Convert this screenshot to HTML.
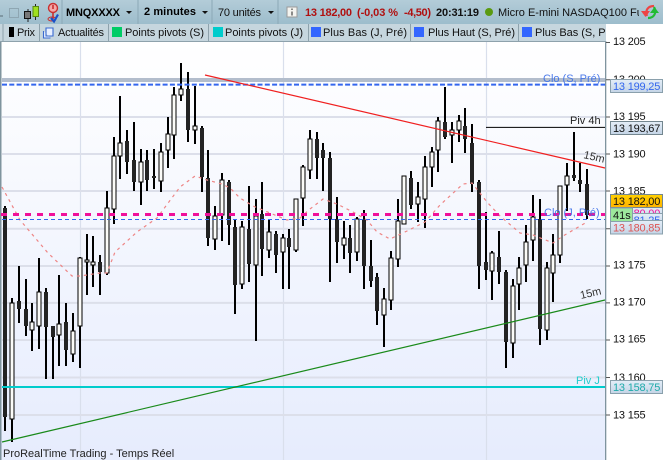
<!DOCTYPE html>
<html><head><meta charset="utf-8"><style>
html,body{margin:0;padding:0;background:#fff;width:663px;height:460px;overflow:hidden}
svg{display:block}
text{font-family:"Liberation Sans",sans-serif;font-size:11px}
</style></head><body>
<svg width="663" height="460" viewBox="0 0 663 460" xmlns="http://www.w3.org/2000/svg">
<defs>
<linearGradient id="bg" x1="0" y1="0" x2="0" y2="1"><stop offset="0" stop-color="#ffffff"/><stop offset="1" stop-color="#e6ecfd"/></linearGradient>
<linearGradient id="top" x1="0" y1="0" x2="0" y2="1"><stop offset="0" stop-color="#b3ccd8"/><stop offset="1" stop-color="#9dbdcc"/></linearGradient>
<linearGradient id="lab" x1="0" y1="0" x2="0" y2="1"><stop offset="0" stop-color="#e4eef8"/><stop offset="1" stop-color="#c4d4e6"/></linearGradient>
<linearGradient id="or" x1="0" y1="0" x2="0" y2="1"><stop offset="0" stop-color="#ffd000"/><stop offset="1" stop-color="#ffb400"/></linearGradient>
<clipPath id="tabs"><rect x="0" y="24" width="606" height="18"/></clipPath>
<clipPath id="nm"><rect x="490" y="0" width="149" height="24"/></clipPath>
<clipPath id="pk"><rect x="610" y="207" width="53" height="6"/></clipPath>
</defs>
<rect width="663" height="460" fill="#fff"/>
<rect x="0" y="41" width="605" height="419" fill="url(#bg)"/>
<rect x="0" y="41" width="1.5" height="419" fill="#7f949e"/>
<!-- grid -->
<path d="M80.5 41V460M283.5 41V460M486.5 41V460" stroke="#d9dfec" stroke-width="1.2" fill="none"/>
<path d="M2 117H605M2 154H605M2 191H605M2 228.7H605M2 266H605M2 302.9H605M2 340H605M2 377.5H605M2 415H605" stroke="#dcdfea" stroke-width="2" fill="none"/>
<rect x="2" y="78" width="603" height="4" fill="#b2bdcc"/>
<!-- wicks -->
<path stroke="#000" stroke-width="2" fill="none" shape-rendering="crispEdges" d="M5 206V431M12 298V442M19 266V323M26 279V336M32 303V351M39 258V349M46 288V379M53 326V379M59 275V366M66 303V366M73 313V362M80 257V368M87 234V295M93 236V287M100 255V295M107 191V275M114 137V224M120 96V179M127 130V174M134 122V191M141 149V205M147 150V191M154 149V189M161 143V192M168 117V168M174 87V159M181 63V101M188 72V142M195 86V144M202 126V192M208 150V246M215 206V250M222 173V241M229 180V245M235 220V314M242 221V289M249 186V282M256 199V341M262 182V276M269 219V258M276 231V273M283 234V289M289 229V289M296 199V252M303 165V226M310 130V179M317 132V179M323 143V191M330 152V282M337 197V263M344 221V259M350 225V273M357 217V261M364 210V289M371 240V287M377 273V325M384 288V347M391 251V310M398 199V267M404 176V224M411 171V209M418 182V222M425 156V228M432 147V187M438 117V172M445 87V139M452 122V163M459 115V142M465 108V153M472 124V192M479 180V289M486 212V280M492 251V300M499 231V284M506 270V368M513 279V358M519 257V310M526 225V282M533 195V261M540 199V345M547 262V340M553 234V302M560 186V263M567 163V211M574 132V181M580 163V192M587 169V219"/>
<!-- dark bodies -->
<path stroke="#232323" stroke-width="4" fill="none" shape-rendering="crispEdges" d="M5 208V417M19 301V309M26 309V326M46 292V327M53 326V337M66 322V350M100 262V272M127 141V162M134 160V182M147 160V180M154 176V178M188 89V130M202 128V177M208 178V238M229 182V225M235 227V285M249 229V264M262 214V249M276 234V255M289 238V247M317 139V158M323 150V158M330 158V219M337 219V242M350 238V253M364 219V266M371 266V281M377 277V311M411 178V205M445 122V137M465 126V139M472 143V184M479 182V266M486 262V270M499 257V272M506 272V342M540 219V329M574 175V178M580 180V184M587 184V215"/>
<!-- white bodies -->
<path stroke="#000" stroke-width="1" fill="#fbfbf8" shape-rendering="crispEdges" d="M10 303h4v116h-4zM30 322h4v8h-4zM37 292h4v34h-4zM57 324h4v11h-4zM71 331h4v23h-4zM78 258h4v68h-4zM85 260h4v2h-4zM91 262h4v3h-4zM105 208h4v65h-4zM112 156h4v53h-4zM118 143h4v13h-4zM139 162h4v20h-4zM159 152h4v29h-4zM166 134h4v16h-4zM172 95h4v40h-4zM179 89h4v6h-4zM193 126h4v4h-4zM213 216h4v23h-4zM220 180h4v35h-4zM240 227h4v57h-4zM254 216h4v49h-4zM267 232h4v18h-4zM281 238h4v14h-4zM294 199h4v51h-4zM301 167h4v31h-4zM308 139h4v31h-4zM342 238h4v7h-4zM355 219h4v33h-4zM382 299h4v16h-4zM389 258h4v42h-4zM396 221h4v38h-4zM402 176h4v48h-4zM416 197h4v7h-4zM423 167h4v32h-4zM430 152h4v15h-4zM436 121h4v29h-4zM450 130h4v5h-4zM457 121h4v9h-4zM490 253h4v18h-4zM511 286h4v57h-4zM517 268h4v16h-4zM524 242h4v23h-4zM531 217h4v23h-4zM545 268h4v62h-4zM551 255h4v18h-4zM558 186h4v69h-4zM565 176h4v9h-4z"/>
<!-- MA -->
<path fill="none" stroke="#ee8585" stroke-width="1.200" stroke-dasharray="3 4" d="M2 187L20 220L48 253L72 276L80 276L100 273L107 273L115 252L137 232L157 218L180 187L195 176L207 180L222 184L230 188L240 198L253 206L270 213L287 220L300 218L310 209L323 199L337 204L353 212L367 220L377 232L390 239L407 231L425 222L440 205L463 184L472 183L487 202L500 216L520 233L533 235L553 243L563 236L587 222"/>
<!-- level lines -->
<path d="M2 84.600H605" stroke="#3366ee" stroke-width="2" stroke-dasharray="5 2.300" fill="none"/>
<path d="M1 214.500H605" stroke="#f0109a" stroke-width="3" stroke-dasharray="6 6" fill="none"/>
<path d="M2 219.500H605" stroke="#3366ee" stroke-width="1" stroke-dasharray="4 3" fill="none"/>
<path d="M2 387H605" stroke="#00cccc" stroke-width="2" fill="none"/>
<path d="M486 127.400H605" stroke="#000" stroke-width="1" fill="none"/>
<path d="M205 75L605 168" stroke="#f02020" stroke-width="1.200" fill="none"/>
<path d="M2 442L605 300" stroke="#1a8a1a" stroke-width="1.200" fill="none"/>
<!-- chart labels -->
<text x="543" y="82" fill="#3a6ee8" fill-opacity=".9">Clo (S, Pré)</text>
<text x="544" y="216" fill="#3a6ee8" fill-opacity=".9">Clo (J, Pré)</text>
<text x="570" y="124" fill="#222">Piv 4h</text>
<text x="576" y="384" fill="#22cccc">Piv J</text>
<text x="0" y="0" fill="#333" transform="translate(583,158) rotate(13)">15m</text>
<text x="0" y="0" fill="#333" transform="translate(581,299) rotate(-13)">15m</text>
<text x="3" y="457" fill="#222" font-size="11">ProRealTime Trading - Temps Réel</text>
<!-- axis -->
<rect x="605" y="41" width="58" height="419" fill="#fff"/>
<rect x="605" y="41" width="1.300" height="419" fill="#7f949e"/>
<path d="M606 42.500h4M606 79.800h4M606 117h4M606 154h4M606 191h4M606 228.700h4M606 266h4M606 302.900h4M606 340h4M606 377.500h4M606 415h4" stroke="#555" stroke-width="1" fill="none"/>
<g fill="#111" letter-spacing="-.2">
<text x="613" y="45">13 205</text>
<text x="613" y="83">13 200</text>
<text x="613" y="120">13 195</text>
<text x="613" y="157.500">13 190</text>
<text x="613" y="194.500">13 185</text>
<text x="613" y="268.500">13 175</text>
<text x="613" y="305.500">13 170</text>
<text x="613" y="342.500">13 165</text>
<text x="613" y="381">13 160</text>
<text x="613" y="418.500">13 155</text>
</g>
<!-- price boxes -->
<g letter-spacing="-.2">
<rect x="610.500" y="79.500" width="52" height="13" fill="url(#lab)" stroke="#8aa0ac"/>
<text x="613" y="90" fill="#3366ee">13 199,25</text>
<rect x="610.500" y="121.500" width="52" height="13" fill="url(#lab)" stroke="#73868f"/>
<text x="613" y="132" fill="#111">13 193,67</text>
<rect x="610.500" y="206.500" width="52" height="13" fill="url(#lab)" stroke="#8aa0ac"/>
<text x="613" y="217" fill="#f0109a">13 180,00</text>
<rect x="610.500" y="213.500" width="52" height="13" fill="url(#lab)" stroke="#8aa0ac"/>
<text x="613" y="224" fill="#3366ee">13 181,25</text>
<rect x="610.500" y="220.500" width="52" height="13.500" fill="url(#lab)" stroke="#8aa0ac"/>
<text x="613" y="231.500" fill="#dd5555">13 180,85</text>
<rect x="610.500" y="194.500" width="52" height="13" fill="url(#or)" stroke="#73868f"/>
<text x="613" y="205" fill="#111">13 182,00</text>
<rect x="610.500" y="208" width="22" height="13.500" fill="#9ce89c" stroke="#8aa0ac"/>
<text x="613" y="219" fill="#111" letter-spacing="0">41s</text>
<rect x="610.500" y="380.500" width="52" height="13" fill="url(#lab)" stroke="#8aa0ac"/>
<text x="613" y="391" fill="#1faaaa">13 158,75</text>
</g>
<!-- top bar -->
<rect x="0" y="0" width="663" height="24" fill="url(#top)"/>
<path d="M62 0V24M138 0V24M212 0V24M278 0V24" stroke="#8ba8b6" stroke-width="1"/>
<rect x="0" y="15" width="3" height="2" fill="#7f97a3"/>
<rect x="9.500" y="8.500" width="9" height="9" fill="none" stroke="#8ea6b2" stroke-width="1"/>
<path d="M28 9V22M35.500 4V20" stroke="#222" stroke-width="1"/>
<rect x="24.500" y="11.500" width="6" height="7" fill="#777" stroke="#111"/>
<rect x="33" y="6.500" width="5.500" height="10" fill="#9fe020" stroke="#5a8a10"/>
<!-- alert icon -->
<circle cx="53" cy="8" r="4.500" fill="#f4a8a8" stroke="#c83030" stroke-width="1.400"/>
<path d="M53 5V9M53 13V19" stroke="#c83030" stroke-width="1.600" fill="none"/>
<ellipse cx="52" cy="19" rx="4" ry="2" fill="none" stroke="#c83030" stroke-width="1"/>
<path d="M51 18L54 21.500L58 14.500" stroke="#1a50c8" stroke-width="2.200" fill="none"/>
<text x="66" y="16" font-weight="bold" fill="#000" textLength="54">MNQXXXX</text>
<path d="M126 11h6l-3 3z" fill="#111"/>
<text x="144" y="15" font-weight="bold" fill="#000" textLength="52">2 minutes</text>
<path d="M202 11h6l-3 3z" fill="#111"/>
<text x="218" y="16" fill="#111" textLength="43">70 unités</text>
<path d="M268 11h6l-3 3z" fill="#111"/>
<!-- info -->
<rect x="287" y="7" width="10" height="10" fill="#f4f4f0" stroke="#9a9a9a" stroke-width="1"/>
<path d="M292 8.500v1.500M292 11.500v4" stroke="#666" stroke-width="1.500" fill="none"/>
<text x="305" y="16" font-weight="bold" fill="#b01010" textLength="47">13 182,00</text>
<text x="357" y="16" font-weight="bold" fill="#b01010" textLength="41">(-0,03 %</text>
<text x="404" y="16" font-weight="bold" fill="#b01010" textLength="27">-4,50)</text>
<text x="436" y="16" font-weight="bold" fill="#111" textLength="43">20:31:19</text>
<circle cx="489" cy="12" r="4" fill="#5a9a10"/>
<g clip-path="url(#nm)"><text x="498" y="16" fill="#111" font-size="11">Micro E-mini NASDAQ100 Futures</text></g>
<!-- refresh -->
<path d="M647 16C645 10 648 6 654 6" stroke="#ee4444" stroke-width="2.200" fill="none"/>
<path d="M641 11h9l-4.500 6z" fill="#ee4444"/>
<path d="M654 7C657 13 654 18 648 18" stroke="#22bb33" stroke-width="2.200" fill="none"/>
<path d="M650 13h9l-4.500-6z" fill="#22bb33"/>
<!-- tab bar -->
<rect x="0" y="24" width="606" height="17.500" fill="#c6d6de"/>
<rect x="0" y="41" width="606" height="1" fill="#8ea2ac"/>
<path d="M3 24V41M39.500 24V41M108.500 24V41M208.500 24V41M308.500 24V41M410.500 24V41M518.500 24V41" stroke="#8ea2ac" stroke-width="1"/>
<rect x="9" y="27" width="5" height="10" fill="#000"/>
<path d="M46 28h7v8h-7zM43.500 31v7h7" fill="#e8f0ff" stroke="#3a6ad0" stroke-width="1.100"/>
<rect x="112" y="27" width="10" height="10" fill="#00cc66"/>
<rect x="213" y="27" width="10" height="10" fill="#00cccc"/>
<rect x="311" y="27" width="10" height="10" fill="#3366ff"/>
<rect x="414" y="27" width="10" height="10" fill="#3366ff"/>
<rect x="522" y="27" width="10" height="10" fill="#3366ff"/>
<g clip-path="url(#tabs)" fill="#111">
<text x="17" y="36" textLength="18">Prix</text>
<text x="58" y="36" textLength="46">Actualités</text>
<text x="125" y="36" textLength="79">Points pivots (S)</text>
<text x="225" y="36" textLength="78">Points pivots (J)</text>
<text x="323" y="36" textLength="84">Plus Bas (J, Pré)</text>
<text x="428" y="36" textLength="87">Plus Haut (S, Pré)</text>
<text x="535" y="36" textLength="84">Plus Bas (S, Pré)</text>
</g>
</svg>
</body></html>
